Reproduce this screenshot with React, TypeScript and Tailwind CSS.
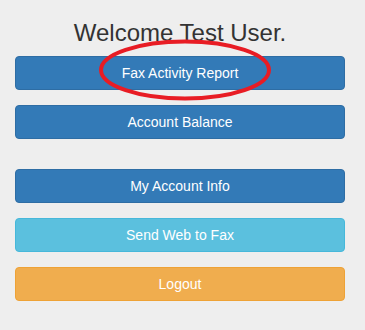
import React from "react";

export default function App() {
  const btn =
    "block w-full h-[34px] rounded-[4px] border text-[14px] leading-[20px] text-white text-center py-[6px] px-[12px]";
  return (
    <div
      className="relative w-[365px] h-[330px] bg-[#eeeeee] pl-[15px] pr-[20px]"
      style={{ fontFamily: '"Liberation Sans", Arial, sans-serif' }}
    >
      <div className="pt-[20px]">
        <h3 className="text-[24px] leading-[26.4px] text-[#333333] text-center mb-[10px]">
          Welcome Test User.
        </h3>
        <div className="flex flex-col gap-[15px]">
          <button className={`${btn} bg-[#337ab7] border-[#2e6da4]`}>Fax Activity Report</button>
          <button className={`${btn} bg-[#337ab7] border-[#2e6da4]`}>Account Balance</button>
          <div className="h-[15px]" />
        </div>
        <div className="flex flex-col gap-[15px]">
          <button className={`${btn} bg-[#337ab7] border-[#2e6da4]`}>My Account Info</button>
          <button className={`${btn} bg-[#5bc0de] border-[#46b8da]`}>Send Web to Fax</button>
          <button className={`${btn} bg-[#f0ad4e] border-[#eea236]`}>Logout</button>
        </div>
      </div>
      <svg
        className="absolute left-[98px] top-[38px] pointer-events-none"
        width="176"
        height="64"
        viewBox="0 0 176 64"
      >
        <ellipse cx="87" cy="32" rx="84" ry="28.5" fill="none" stroke="#e81c24" strokeWidth="4" />
      </svg>
    </div>
  );
}
